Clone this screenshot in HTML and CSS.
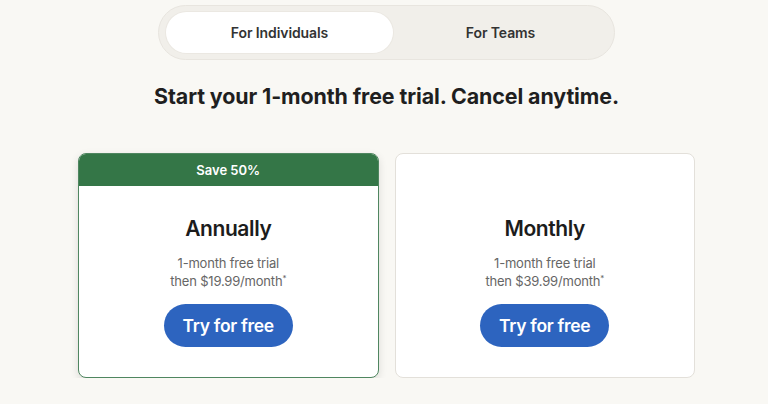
FILE: index.html
```html
<!DOCTYPE html>
<html lang="en">
<head>
  <meta charset="UTF-8">
  <title>Start your free trial</title>
  <link rel="stylesheet" href="styles.css">
</head>
<body>
  <div class="page">
    <div class="switcher">
      <button class="tab active">For Individuals</button>
      <button class="tab">For Teams</button>
    </div>

    <h1 class="headline">Start your 1-month free trial. Cancel anytime.</h1>

    <div class="plans">
      <div class="plan featured">
        <div class="plan-badge">Save 50%</div>
        <div class="plan-body">
          <h2>Annually</h2>
          <p>1-month free trial<br>then $19.99/month<sup>*</sup></p>
          <button class="try-btn">Try for free</button>
        </div>
      </div>
      <div class="plan">
        <div class="plan-badge empty"></div>
        <div class="plan-body">
          <h2>Monthly</h2>
          <p>1-month free trial<br>then $39.99/month<sup>*</sup></p>
          <button class="try-btn">Try for free</button>
        </div>
      </div>
    </div>
  </div>
</body>
</html>
```

FILE: styles.css
```css
* { margin: 0; padding: 0; box-sizing: border-box; }
body {
  font-family: Inter, "Noto Sans", sans-serif;
  background: #f9f8f4;
  color: #222;
  overflow: hidden;
}
.page {
  width: 617px;
  margin: 0 auto;
  padding: 5px 0 0 5px;
  box-sizing: content-box;
}

/* top switcher */
.switcher {
  width: 457px;
  height: 55px;
  margin: 0 auto;
  padding: 6px 6px 6px 7px;
  display: grid;
  grid-template-columns: 227px 1fr;
  background: #f1efea;
  border: 1px solid #e8e5df;
  border-radius: 28px;
}
.tab {
  border: none;
  background: transparent;
  font-family: inherit;
  font-size: 14px;
  font-weight: 600;
  color: #333;
  border-radius: 22px;
  letter-spacing: -0.1px;
}
.tab.active {
  background: #fff;
  box-shadow: 0 0 0 1px #ebe8e2;
}

.headline {
  text-align: center;
  font-size: 21.4px;
  font-weight: 700;
  color: #1f1f1f;
  margin: 23px 0 0;
  letter-spacing: -0.1px;
}

/* plans */
.plans {
  display: grid;
  grid-template-columns: 1fr 1fr;
  gap: 16px;
  margin-top: 44px;
}
.plan {
  height: 225px;
  background: #fff;
  border: 1px solid #e3e0da;
  border-radius: 8px;
  overflow: hidden;
  display: flex;
  flex-direction: column;
}
.plan.featured {
  border-color: #4f8660;
  box-shadow: 0 3px 8px rgba(0,0,0,0.12);
}
.plan-badge {
  height: 32px;
  background: #347647;
  color: #fff;
  font-size: 13px;
  font-weight: 600;
  display: flex;
  align-items: center;
  justify-content: center;
}
.plan-badge.empty { background: transparent; }
.plan-body {
  text-align: center;
  padding-top: 30px;
}
.plan-body h2 {
  font-size: 21px;
  font-weight: 600;
  color: #1c1c1c;
  line-height: 26px;
  letter-spacing: -0.4px;
}
.plan-body p {
  margin-top: 12px;
  font-size: 13px;
  line-height: 18px;
  color: #666;
  letter-spacing: -0.2px;
}
.plan-body sup {
  font-size: 8px;
  line-height: 0;
}
.try-btn {
  margin-top: 14px;
  width: 129px;
  height: 43px;
  border: none;
  border-radius: 22px;
  background: #2d64bf;
  color: #fff;
  font-family: inherit;
  font-size: 17.5px;
  font-weight: 600;
  letter-spacing: -0.3px;
  cursor: pointer;
}
```
